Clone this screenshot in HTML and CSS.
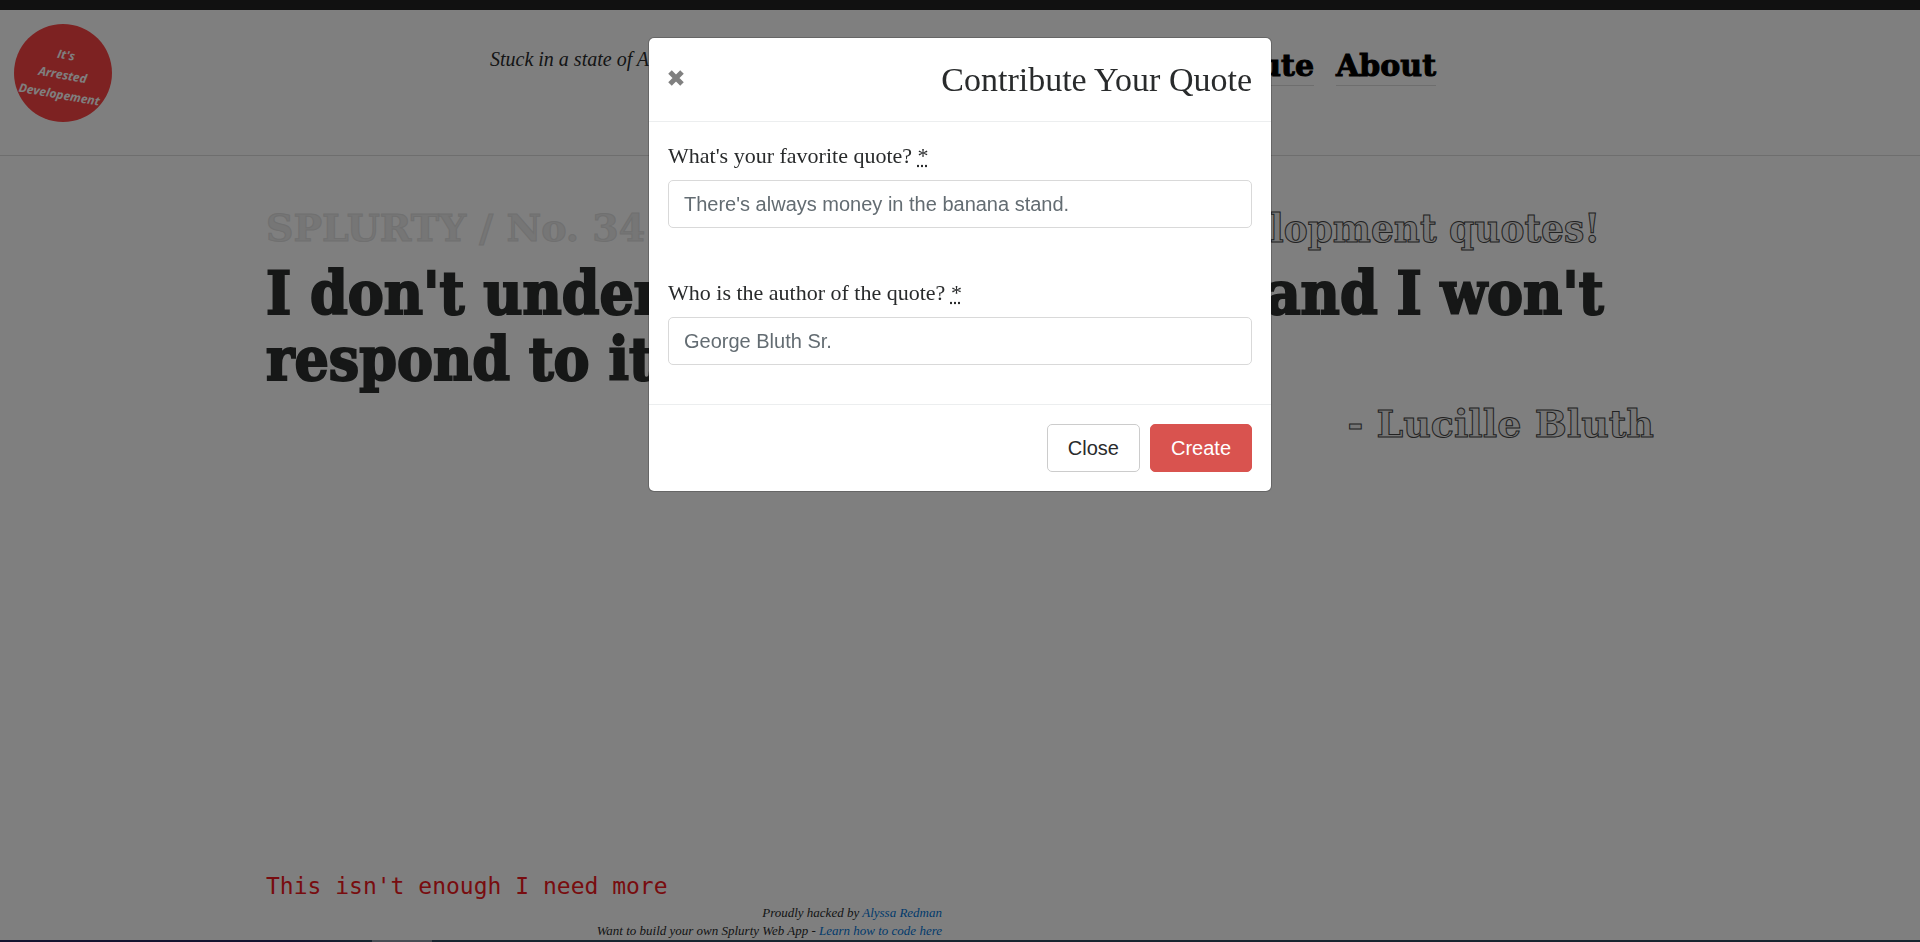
FILE: index.html
```html
<!DOCTYPE html>
<html lang="en">
<head>
<meta charset="utf-8">
<meta name="viewport" content="width=device-width, initial-scale=1">
<title>Splurty</title>
<link rel="stylesheet" href="styles.css">
</head>
<body>
<div class="page">
  <header class="site-header">
    <a class="logo" href="#" aria-label="Home">
      <svg viewBox="0 0 98 98" width="98" height="98">
        <circle cx="49" cy="49" r="49"/>
        <g transform="rotate(10 49 49)">
          <text x="49" y="35">It's</text>
          <text x="49" y="55">Arrested</text>
          <text x="49" y="75">Developement</text>
        </g>
      </svg>
    </a>
    <p class="tagline">Stuck in a state of Arrested Development?</p>
    <nav class="nav">
      <a href="#">Contribute</a>
      <a href="#">About</a>
    </nav>
  </header>
  <main class="content">
    <div class="kicker"><span class="kicker-id">SPLURTY / No. 34</span><span class="kicker-text outlined">Find Arrested Development quotes!</span></div>
    <h1 class="quote">I don't understand the question, and I won't respond to it.</h1>
    <p class="author outlined">- Lucille Bluth</p>
    <a class="more" href="#">This isn't enough I need more</a>
  </main>
  <footer class="site-footer">
    <div class="credits">
      <p>Proudly hacked by <a href="#">Alyssa Redman</a></p>
      <p>Want to build your own Splurty Web App - <a href="#">Learn how to code here</a></p>
    </div>
  </footer>
  <div class="edge"></div>
</div>
<div class="backdrop">
  <form class="modal" role="dialog" aria-labelledby="modal-title">
    <div class="modal-header">
      <button class="close" type="button" aria-label="Dismiss"><svg viewBox="0 0 16 16" width="16" height="16"><path d="M2 2 14 14M14 2 2 14"/></svg></button>
      <h2 id="modal-title">Contribute Your Quote</h2>
    </div>
    <div class="modal-body">
      <div class="field">
        <label for="quote">What's your favorite quote? <abbr title="required">*</abbr></label>
        <input id="quote" type="text" placeholder="There's always money in the banana stand.">
      </div>
      <div class="field">
        <label for="author">Who is the author of the quote? <abbr title="required">*</abbr></label>
        <input id="author" type="text" placeholder="George Bluth Sr.">
      </div>
    </div>
    <div class="modal-footer">
      <button class="btn" type="button">Close</button>
      <button class="btn btn-primary" type="submit">Create</button>
    </div>
  </form>
</div>
</body>
</html>
```

FILE: styles.css
```css
* { box-sizing: border-box; }
body { margin: 0; color: #292b2c; background: #fff; font-family: Palatino, "Liberation Serif", serif; font-size: 20px; line-height: 30px; }
h1, h2, p { margin: 0; }
a { text-decoration: none; }
.page { min-height: 100vh; display: flex; flex-direction: column; border-top: 10px solid #222; }
.site-header { display: grid; grid-template-columns: 490fr 400fr 546fr 484fr; min-height: 146px; border-bottom: 1px solid #ddd; }
.logo { padding: 14px; }
.logo svg { display: block; }
.logo circle { fill: #fb4545; }
.logo text { fill: #fff; text-anchor: middle; font: italic bold 12px "Open Sans", sans-serif; }
.tagline { padding-top: 34px; font-style: italic; font-size: 20px; white-space: nowrap; }
.nav { display: flex; justify-content: flex-end; align-items: flex-start; gap: 22px; padding-top: 36px; }
.nav a { color: #000; font: bold 30px/39px "DejaVu Serif", serif; border-bottom: 1px solid #ddd; -webkit-text-stroke: 1px #000; }
.content { flex: 1; width: 100%; max-width: 1388px; margin: 0 auto; padding-top: 48px; display: flex; flex-direction: column; font-family: "DejaVu Serif", serif; }
.kicker { display: flex; justify-content: space-between; padding-right: 54px; font-size: 38px; line-height: 48px; font-weight: bold; white-space: nowrap; }
.kicker-id { color: #ececec; -webkit-text-stroke: 1px #e0e0e0; }
.kicker-text { font-family: "DejaVu Serif Condensed", "DejaVu Serif", serif; font-size: 40px; }
.outlined { color: #eee; -webkit-text-stroke: 1px #444; }
.quote { font-family: "DejaVu Serif Condensed", "DejaVu Serif", serif; font-size: 60px; line-height: 66px; color: #2c2f2e; -webkit-text-stroke: 2px #2c2f2e; padding-top: 8px; }
.author { align-self: flex-end; font-size: 38px; line-height: 48px; font-weight: bold; padding-top: 8px; }
.more { margin-top: auto; align-self: flex-start; color: #f01820; font: 23px/32px "DejaVu Sans Mono", monospace; }
.site-footer { width: 100%; max-width: 1388px; margin: 0 auto; padding-top: 2px; display: grid; grid-template-columns: 676fr 712fr; }
.credits { text-align: right; font-size: 13px; line-height: 18px; font-style: italic; white-space: nowrap; }
.credits a { color: #0275d8; }
.edge { height: 2px; background: linear-gradient(90deg, #282860 15%, #304a60 19%, #304a60 19.4%, #9098a8 19.4%, #9098a8 22.5%, #304a60 22.5%); }
.backdrop { position: fixed; inset: 0; padding: 37px 16px; background: rgba(0, 0, 0, .5); }
.modal { max-width: 624px; margin: 0 auto; background: #fff; background-clip: padding-box; border: 1px solid rgba(0, 0, 0, .2); border-radius: 6px; }
.modal-header { display: flex; justify-content: space-between; align-items: center; padding: 19px; border-bottom: 1px solid #eceeef; }
.modal-header h2 { font-size: 34px; line-height: 45px; font-weight: normal; }
.close { padding: 0 0 3px; border: 0; background: none; display: flex; }
.close path { stroke: #808080; stroke-width: 5; fill: none; }
.modal-body { padding: 19px 19px 39px; display: flex; flex-direction: column; gap: 50px; }
.field { display: flex; flex-direction: column; gap: 9px; }
.field label { font-size: 22px; line-height: 30px; }
.field abbr { text-decoration: underline dotted; }
.field input { width: 100%; height: 48px; padding: 0 15px; border: 1px solid #d9d9d9; border-radius: 5px; font: 20px "Liberation Sans", sans-serif; }
.field input::placeholder { color: #636c72; opacity: 1; }
.modal-footer { display: flex; justify-content: flex-end; gap: 10px; padding: 19px; border-top: 1px solid #eceeef; }
.btn { height: 48px; padding: 0 20px; border: 1px solid #ccc; border-radius: 5px; background: #fff; color: #292b2c; font: 20px "Liberation Sans", sans-serif; }
.btn-primary { background: #d9534f; border-color: #d9534f; color: #fff; }
```
